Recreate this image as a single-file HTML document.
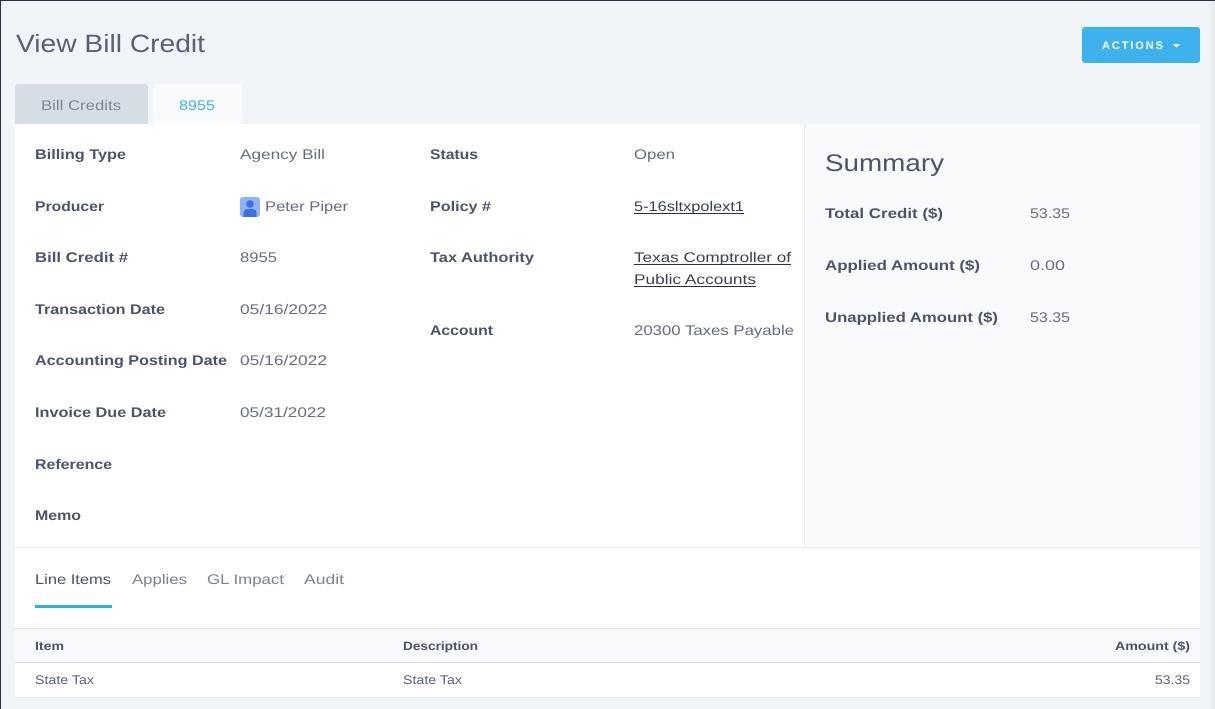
<!DOCTYPE html>
<html><head><meta charset="utf-8"><title>View Bill Credit</title>
<style>
html,body{margin:0;padding:0;width:1215px;height:709px;overflow:hidden;background:#f1f4f9}
svg{display:block;position:absolute;left:0;top:0}
text{font-family:"Liberation Sans",sans-serif;font-size:14px;fill:#666c7f;text-rendering:geometricPrecision}
.b{font-weight:700;fill:#4c5269}
.t{font-size:12.5px;fill:#5b6175}
.h{font-size:12px;font-weight:700;fill:#4c5269}
</style></head><body>
<svg width="1215" height="709" viewBox="0 0 1215 709" xmlns="http://www.w3.org/2000/svg">
<defs><linearGradient id="s" x1="0" x2="1" y1="0" y2="0"><stop offset="0" stop-color="#f1f4f9"/><stop offset="1" stop-color="#e4e7ee"/></linearGradient></defs>
<rect width="1215" height="709" fill="#f1f4f9"/>
<rect x="1209" y="0" width="6" height="709" fill="url(#s)"/>
<rect x="0" y="0" width="1215" height="1" fill="#2a3044"/>
<rect x="0" y="0" width="1" height="709" fill="#2a3044"/>

<text x="16" y="52" style="font-size:25px;fill:#5a6075" lengthAdjust="spacingAndGlyphs" textLength="189">View Bill Credit</text>
<rect x="1082" y="27" width="118" height="36" rx="3" fill="#3cb1ec"/>
<text x="1102" y="49" style="font-size:11px;font-weight:700;fill:#fff;letter-spacing:1.9px">ACTIONS</text>
<path d="M1172.5 44h8l-4 3.500z" fill="#fff"/>

<path d="M15 124V87a3 3 0 0 1 3-3h127a3 3 0 0 1 3 3v37z" fill="#d7dde5"/>
<path d="M153 124V87a3 3 0 0 1 3-3h83a3 3 0 0 1 3 3v37z" fill="#f9fafc"/>
<text x="41" y="110" style="fill:#7f8797" lengthAdjust="spacingAndGlyphs" textLength="80">Bill Credits</text>
<text x="179" y="110" style="fill:#3cb1ec" lengthAdjust="spacingAndGlyphs" textLength="36">8955</text>

<rect x="15" y="124" width="1185" height="574" fill="#fff"/>
<rect x="805" y="124" width="395" height="423" fill="#f9fafc"/>
<rect x="804" y="124" width="1" height="423" fill="#ebedf1"/>
<rect x="15" y="547" width="1185" height="1" fill="#ebedf1"/>

<text class="b" x="35" y="159" lengthAdjust="spacingAndGlyphs" textLength="91">Billing Type</text>
<text class="b" x="35" y="211" lengthAdjust="spacingAndGlyphs" textLength="69">Producer</text>
<text class="b" x="35" y="262" lengthAdjust="spacingAndGlyphs" textLength="93">Bill Credit #</text>
<text class="b" x="35" y="314" lengthAdjust="spacingAndGlyphs" textLength="130">Transaction Date</text>
<text class="b" x="35" y="365" lengthAdjust="spacingAndGlyphs" textLength="192">Accounting Posting Date</text>
<text class="b" x="35" y="417" lengthAdjust="spacingAndGlyphs" textLength="131">Invoice Due Date</text>
<text class="b" x="35" y="469" lengthAdjust="spacingAndGlyphs" textLength="77">Reference</text>
<text class="b" x="35" y="520" lengthAdjust="spacingAndGlyphs" textLength="46">Memo</text>

<text x="240" y="159" lengthAdjust="spacingAndGlyphs" textLength="85">Agency Bill</text>
<rect x="240" y="197" width="20" height="20" rx="3" fill="#8fb3fb"/>
<circle cx="250" cy="204" r="3.800" fill="#3f6fdc"/>
<path d="M243.500 217v-4a4 4 0 0 1 4-4h5a4 4 0 0 1 4 4v4z" fill="#3f6fdc"/>
<text x="265" y="211" lengthAdjust="spacingAndGlyphs" textLength="83">Peter Piper</text>
<text x="240" y="262" lengthAdjust="spacingAndGlyphs" textLength="37">8955</text>
<text x="240" y="314" lengthAdjust="spacingAndGlyphs" textLength="87">05/16/2022</text>
<text x="240" y="365" lengthAdjust="spacingAndGlyphs" textLength="87">05/16/2022</text>
<text x="240" y="417" lengthAdjust="spacingAndGlyphs" textLength="86">05/31/2022</text>

<text class="b" x="430" y="159" lengthAdjust="spacingAndGlyphs" textLength="48">Status</text>
<text class="b" x="430" y="211" lengthAdjust="spacingAndGlyphs" textLength="61">Policy #</text>
<text class="b" x="430" y="262" lengthAdjust="spacingAndGlyphs" textLength="104">Tax Authority</text>
<text class="b" x="430" y="335" lengthAdjust="spacingAndGlyphs" textLength="63">Account</text>

<text x="634" y="159" lengthAdjust="spacingAndGlyphs" textLength="41">Open</text>
<text x="634" y="211" style="fill:#3a3f50" lengthAdjust="spacingAndGlyphs" textLength="110">5-16sltxpolext1</text>
<rect x="634" y="213" width="110" height="1" fill="#2c3040"/>
<text x="634" y="262" style="fill:#3a3f50" lengthAdjust="spacingAndGlyphs" textLength="157">Texas Comptroller of</text>
<rect x="634" y="264" width="157" height="1" fill="#2c3040"/>
<text x="634" y="284" style="fill:#3a3f50" lengthAdjust="spacingAndGlyphs" textLength="122">Public Accounts</text>
<rect x="634" y="286" width="122" height="1" fill="#2c3040"/>
<text x="634" y="335" lengthAdjust="spacingAndGlyphs" textLength="160">20300 Taxes Payable</text>

<text x="825" y="171" style="font-size:24px;fill:#4c5269" lengthAdjust="spacingAndGlyphs" textLength="119">Summary</text>
<text class="b" x="825" y="218" lengthAdjust="spacingAndGlyphs" textLength="118">Total Credit ($)</text>
<text class="b" x="825" y="270" lengthAdjust="spacingAndGlyphs" textLength="155">Applied Amount ($)</text>
<text class="b" x="825" y="322" lengthAdjust="spacingAndGlyphs" textLength="173">Unapplied Amount ($)</text>
<text x="1030" y="218" lengthAdjust="spacingAndGlyphs" textLength="40">53.35</text>
<text x="1030" y="270" lengthAdjust="spacingAndGlyphs" textLength="35">0.00</text>
<text x="1030" y="322" lengthAdjust="spacingAndGlyphs" textLength="40">53.35</text>

<text x="35" y="584" style="fill:#4c5269" lengthAdjust="spacingAndGlyphs" textLength="76">Line Items</text>
<text x="132" y="584" style="fill:#7a8191" lengthAdjust="spacingAndGlyphs" textLength="55">Applies</text>
<text x="207" y="584" style="fill:#7a8191" lengthAdjust="spacingAndGlyphs" textLength="77">GL Impact</text>
<text x="304" y="584" style="fill:#7a8191" lengthAdjust="spacingAndGlyphs" textLength="40">Audit</text>
<rect x="35" y="605" width="77" height="3" fill="#2bb0ea"/>

<rect x="15" y="628" width="1185" height="35" fill="#f8f9fb"/>
<rect x="15" y="628" width="1185" height="1" fill="#dbe2ec"/>
<rect x="15" y="662" width="1185" height="1" fill="#d9e1ec"/>
<rect x="15" y="697" width="1185" height="1" fill="#e6eaf0"/>
<text class="h" x="35" y="650" lengthAdjust="spacingAndGlyphs" textLength="29">Item</text>
<text class="h" x="403" y="650" lengthAdjust="spacingAndGlyphs" textLength="75">Description</text>
<text class="h" x="1115" y="650" lengthAdjust="spacingAndGlyphs" textLength="75">Amount ($)</text>
<text class="t" x="35" y="684" lengthAdjust="spacingAndGlyphs" textLength="59">State Tax</text>
<text class="t" x="403" y="684" lengthAdjust="spacingAndGlyphs" textLength="59">State Tax</text>
<text class="t" x="1155" y="684" lengthAdjust="spacingAndGlyphs" textLength="35">53.35</text>
</svg>
</body></html>
